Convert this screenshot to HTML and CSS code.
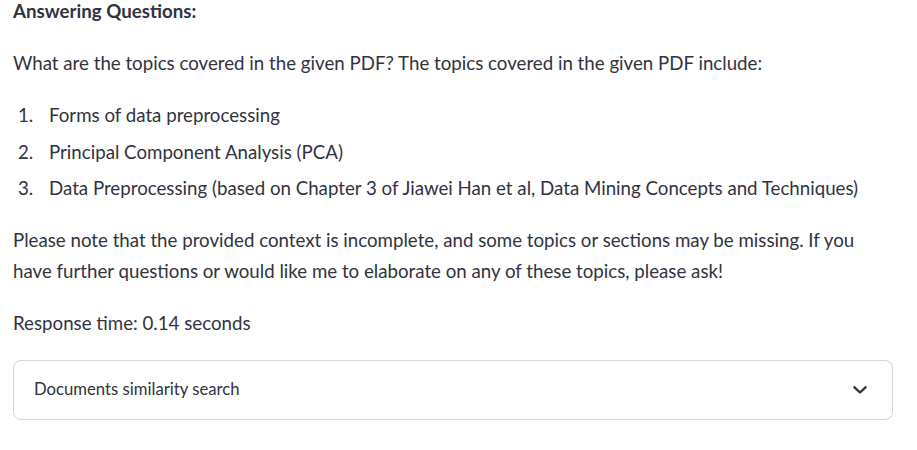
FILE: index.html
```html
<!DOCTYPE html>
<html>
<head>
<meta charset="utf-8">
<link rel="stylesheet" href="styles.css">
</head>
<body>
<main class="content">
  <p class="heading"><strong>Answering Questions:</strong></p>
  <p>What are the topics covered in the given PDF? The topics covered in the given PDF include:</p>
  <ol class="topics">
    <li>Forms of data preprocessing</li>
    <li>Principal Component Analysis (PCA)</li>
    <li>Data Preprocessing (based on Chapter 3 of Jiawei Han et al, Data Mining Concepts and Techniques)</li>
  </ol>
  <p>Please note that the provided context is incomplete, and some topics or sections may be missing. If you have further questions or would like me to elaborate on any of these topics, please ask!</p>
  <p>Response time: 0.14 seconds</p>
  <details class="expander">
    <summary class="expander-summary">
      <span>Documents similarity search</span>
      <svg class="chevron" width="14" height="8" viewBox="0 0 14 8" fill="none" stroke="#31333f" stroke-width="2.4" stroke-linecap="round" stroke-linejoin="round"><path d="M1.5 1.3L7 6.5l5.5-5.2"/></svg>
    </summary>
  </details>
</main>
</body>
</html>
```
FILE: styles.css
```css
html, body {
  margin: 0;
  padding: 0;
  background: #ffffff;
}
body {
  font-family: Lato, "Noto Sans", sans-serif;
  color: rgb(49, 51, 63);
  font-size: 18.7px;
  line-height: 31px;
}
.content {
  padding: 0 24px 0 13px;
  margin-top: -4px;
}
p {
  margin: 0 0 21px 0;
}
.heading strong {
  font-weight: 700;
}
.topics {
  margin: 0 0 21px 0;
  padding-left: 5px;
  list-style: none;
  counter-reset: topic;
}
.topics li {
  display: flex;
  margin: 0 0 5.5px 0;
  counter-increment: topic;
}
.topics li::before {
  content: counter(topic) ".";
  flex: 0 0 31px;
}
.topics li:last-child {
  margin-bottom: 0;
}
.expander {
  border: 1px solid rgba(49, 51, 63, 0.2);
  border-radius: 8px;
  height: 58px;
  margin-top: -0.5px;
}
.expander-summary {
  list-style: none;
  display: flex;
  align-items: center;
  justify-content: space-between;
  height: 58px;
  padding: 0 25px 0 20px;
  font-size: 16.7px;
  cursor: pointer;
}
.expander-summary::-webkit-details-marker {
  display: none;
}
.chevron {
  display: block;
}
```
